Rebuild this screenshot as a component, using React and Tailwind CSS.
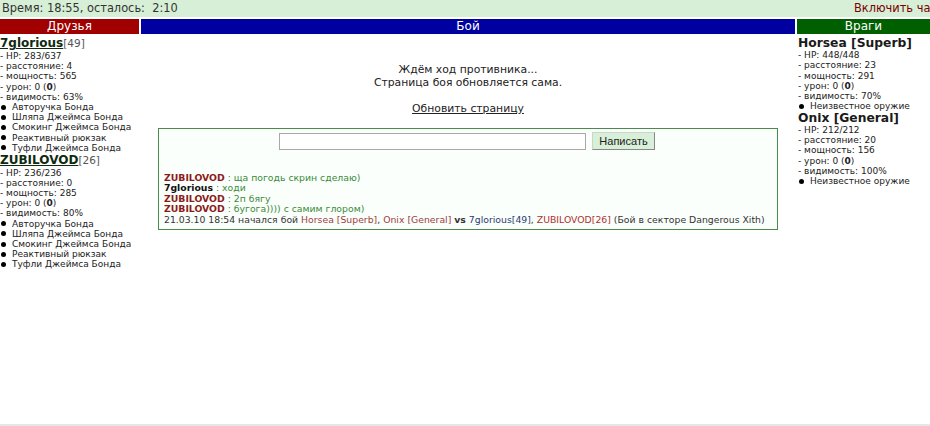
import React from "react";

const Bullet = ({ children }) => (
  <div className="flex items-center">
    <span className="w-[5px] h-[5px] rounded-full bg-black ml-[1px] mr-[6px] shrink-0" />
    <span>{children}</span>
  </div>
);

const Stats = ({ hp, dist, power, vis }) => (
  <>
    <div>- HP: {hp}</div>
    <div>- расстояние: {dist}</div>
    <div>- мощность: {power}</div>
    <div>- урон: 0 (<b>0</b>)</div>
    <div>- видимость: {vis}</div>
  </>
);

const bondItems = [
  "Авторучка Бонда",
  "Шляпа Джеймса Бонда",
  "Смокинг Джеймса Бонда",
  "Реактивный рюкзак",
  "Туфли Джеймса Бонда",
];

export default function App() {
  return (
    <div className="h-[426px] w-[930px] flex flex-col bg-white overflow-hidden text-[#222]" style={{ fontFamily: '"DejaVu Sans", Verdana, sans-serif' }}>
      <div className="flex-1">
        {/* top bar */}
        <div className="h-[17px] bg-[#d6efd6] flex items-center text-[11.4px] leading-[17px] whitespace-nowrap">
          <span className="pl-[2px] text-[#333]">Время: 18:55, осталось:&nbsp; 2:10</span>
          <span className="flex-1" />
          <span className="w-[76px] overflow-hidden text-[#7a0000]">Включить ча</span>
        </div>
        {/* headers */}
        <div className="mt-[2px] grid grid-cols-[139px_1fr_133px] gap-x-[2px] text-white text-[12px] leading-[15px] text-center">
          <div className="bg-[#a00000] h-[15px]">Друзья</div>
          <div className="bg-[#0000a0] h-[15px]">Бой</div>
          <div className="bg-[#006000] h-[15px]">Враги</div>
        </div>
        <div className="grid grid-cols-[139px_1fr_133px] gap-x-[2px]">
          {/* friends */}
          <div className="pt-[3px] text-[9px] leading-[10.2px] whitespace-nowrap">
            <div className="leading-[13px]">
              <span className="text-[12px] font-bold underline text-[#0f2a0f]">7glorious</span>
              <span className="text-[10.5px] text-[#555]">[49]</span>
            </div>
            <Stats hp="283/637" dist="4" power="565" vis="63%" />
            {bondItems.map((t) => (
              <Bullet key={"a" + t}>{t}</Bullet>
            ))}
            <div className="leading-[13px] mt-[0.5px]">
              <span className="text-[12px] font-bold underline text-[#0f2a0f]">ZUBILOVOD</span>
              <span className="text-[10.5px] text-[#555]">[26]</span>
            </div>
            <Stats hp="236/236" dist="0" power="285" vis="80%" />
            {bondItems.map((t) => (
              <Bullet key={"b" + t}>{t}</Bullet>
            ))}
          </div>
          {/* battle */}
          <div className="flex flex-col items-center">
            <div className="pt-[29px] text-[10.8px] leading-[13px] text-center text-[#222]">
              <div>Ждём ход противника...</div>
              <div>Страница боя обновляется сама.</div>
              <div className="h-[13px]" />
              <div className="underline">Обновить страницу</div>
            </div>
            <div className="mt-[13px] w-[620px] h-[102px] border border-[#4a8a4a] bg-[#fbfffb] px-[5px] pt-[3px]">
              <div className="flex justify-center items-center gap-[6px] -translate-x-[1px]">
                <div className="w-[307px] h-[17px] bg-white border border-[#a8a8a8]" />
                <div className="h-[18px] w-[63px] text-center bg-[#d8f0d8] border border-[#c8d8c8] border-r-[#888] border-b-[#888] text-[11px] leading-[16px] text-[#222]" style={{ fontFamily: '"Liberation Sans", Arial, sans-serif' }}>
                  Написать
                </div>
              </div>
              <div className="mt-[23px] text-[9.3px] leading-[10.4px] whitespace-nowrap">
                <div>
                  <b className="text-[#8b1a1a]">ZUBILOVOD</b>
                  <span className="text-[#3a8a3a]"> : ща погодь скрин сделаю)</span>
                </div>
                <div>
                  <b className="text-[#111]">7glorious</b>
                  <span className="text-[#3a8a3a]"> : ходи</span>
                </div>
                <div>
                  <b className="text-[#8b1a1a]">ZUBILOVOD</b>
                  <span className="text-[#3a8a3a]"> : 2п бягу</span>
                </div>
                <div>
                  <b className="text-[#8b1a1a]">ZUBILOVOD</b>
                  <span className="text-[#3a8a3a]"> : бугога)))) с самим глором)</span>
                </div>
                <div className="text-[#333]">
                  21.03.10 18:54 начался бой <span className="text-[#a04040]">Horsea [Superb]</span>,{" "}
                  <span className="text-[#a04040]">Onix [General]</span> <b>vs</b>{" "}
                  <span className="text-[#2a3a70]">7glorious[49]</span>,{" "}
                  <span className="text-[#b03030]">ZUBILOVOD[26]</span> (Бой в секторе Dangerous Xith)
                </div>
              </div>
            </div>
          </div>
          {/* enemies */}
          <div className="pt-[3px] pl-[1px] text-[9px] leading-[10.3px] whitespace-nowrap">
            <div className="text-[12.3px] leading-[13px] font-bold text-[#1a1a1a]">Horsea [Superb]</div>
            <Stats hp="448/448" dist="23" power="291" vis="70%" />
            <Bullet>Неизвестное оружие</Bullet>
            <div className="text-[12.3px] leading-[13px] font-bold text-[#1a1a1a]">Onix [General]</div>
            <Stats hp="212/212" dist="20" power="156" vis="100%" />
            <Bullet>Неизвестное оружие</Bullet>
          </div>
        </div>
      </div>
      <div className="h-[2px] bg-[#e4e6ea]" />
    </div>
  );
}
